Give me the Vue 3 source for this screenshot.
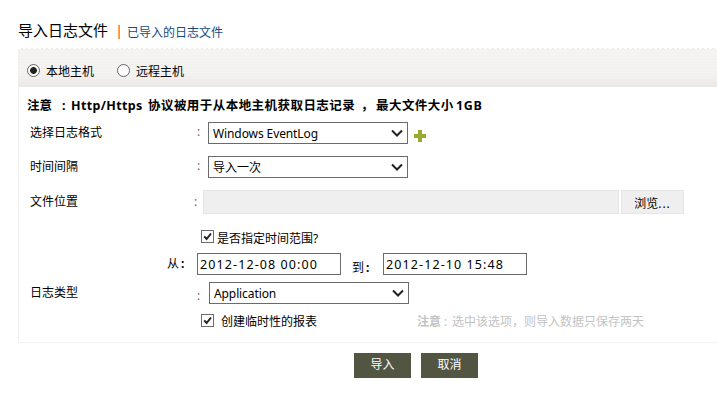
<script setup>
import { ref } from 'vue'

const host = ref('local')
const format = ref('Windows EventLog')
const interval = ref('导入一次')
const useRange = ref(true)
const from = ref('2012-12-08 00:00')
const to = ref('2012-12-10 15:48')
const logType = ref('Application')
const temporary = ref(true)
</script>

<template>
  <main class="page">
    <header class="heading">
      <h1>导入日志文件</h1>
      <i class="divider"></i>
      <a class="imported">已导入的日志文件</a>
    </header>

    <section class="panel">
      <div class="hosts">
        <label><input v-model="host" type="radio" value="local" /><span>本地主机</span></label>
        <label class="remote"><input v-model="host" type="radio" value="remote" /><span>远程主机</span></label>
      </div>

      <p class="note">
        <span class="n1">注意</span><span class="n2">:</span><span class="n3">Http/Https</span><span class="n4">协议被用于从本地主机获取日志记录</span><span class="n5">，</span><span class="n6">最大文件大小</span><span class="n7">1GB</span>
      </p>

      <div class="row format">
        <span class="name">选择日志格式</span><span class="colon">:</span>
        <div class="select">
          <select v-model="format"><option>Windows EventLog</option></select>
          <svg class="chevron" viewBox="0 0 12 9"><path d="M1 1.5 6 6.5 11 1.5" /></svg>
        </div>
        <svg class="plus" viewBox="0 0 12 12"><path d="M4 0h4v4h4v4H8v4H4V8H0V4h4z" /></svg>
      </div>

      <div class="row interval">
        <span class="name">时间间隔</span><span class="colon">:</span>
        <div class="select cjk">
          <select v-model="interval"><option>导入一次</option></select>
          <svg class="chevron" viewBox="0 0 12 9"><path d="M1 1.5 6 6.5 11 1.5" /></svg>
        </div>
      </div>

      <div class="row location">
        <span class="name">文件位置</span><span class="colon">:</span>
        <div class="path"></div>
        <button class="browse">浏览<span>...</span></button>
      </div>

      <label class="row range">
        <span class="box"><input v-model="useRange" type="checkbox" /><svg viewBox="0 0 13 13"><path d="M3.2 6.4 5.6 9 10 3.5" /></svg></span>
        <span class="caption">是否指定时间范围?</span>
      </label>

      <div class="row dates">
        <span class="from">从<b>:</b></span>
        <input v-model="from" class="date" type="text" />
        <span class="to">到<b>:</b></span>
        <input v-model="to" class="date" type="text" />
      </div>

      <div class="row type">
        <span class="name">日志类型</span><span class="colon">:</span>
        <div class="select">
          <select v-model="logType"><option>Application</option></select>
          <svg class="chevron" viewBox="0 0 12 9"><path d="M1 1.5 6 6.5 11 1.5" /></svg>
        </div>
      </div>

      <div class="row temporary">
        <label class="temp">
          <span class="box"><input v-model="temporary" type="checkbox" /><svg viewBox="0 0 13 13"><path d="M3.2 6.4 5.6 9 10 3.5" /></svg></span>
          <span class="caption">创建临时性的报表</span>
        </label>
        <span class="hint"><b>注意</b><i>:</i>选中该选项，则导入数据只保存两天</span>
      </div>
    </section>

    <footer class="actions">
      <button>导入</button>
      <button>取消</button>
    </footer>
  </main>
</template>

<style>
body {
  background: #fff;
  overflow: hidden;
}
</style>

<style scoped>
* {
  box-sizing: border-box;
}
.page {
  width: 717px;
  height: 407px;
  padding: 20px 0 0 18px;
  overflow: hidden;
  color: #000;
  font: 12px/14px "Noto Sans", "Noto Sans CJK SC", sans-serif;
  white-space: nowrap;
}
input, select, button {
  margin: 0;
  border-radius: 0;
  appearance: none;
  color: inherit;
  font: inherit;
}
.heading {
  display: flex;
  height: 28px;
}
h1 {
  width: 100px;
  margin: 0;
  font-size: 15px;
  font-weight: 400;
  line-height: 20px;
}
.divider {
  width: 2px;
  height: 14px;
  margin-top: 5px;
  border-left: 1px solid #ffa64d;
  border-right: 1px solid #c9a37b;
}
.imported {
  margin: 6px 0 0 7px;
  color: #164b7c;
}
.panel {
  height: 295px;
  border-left: 1px solid #f1f1f1;
  border-bottom: 1px solid #f1f1f1;
}
.hosts {
  display: flex;
  height: 39px;
  margin-left: -1px;
  padding: 15px 0 0 9px;
  border-top: 1px dashed #fff;
  background:
    repeating-linear-gradient(0deg, transparent 0 2px, rgba(255, 255, 255, .18) 2px 3px),
    linear-gradient(#f5f3f0, #f3f1ef 65%, #eae7e4);
}
.hosts label {
  display: flex;
  width: 90px;
}
.hosts input {
  width: 13px;
  height: 13px;
  border: 1px solid #666;
  border-radius: 50%;
  background: #fff;
}
.hosts input:checked {
  background: radial-gradient(circle, #222 0 3px, #fff 3.8px);
}
.hosts span {
  margin: 1px 0 0 6px;
}
.note {
  display: flex;
  height: 35px;
  margin: 0;
  padding: 12px 0 0 8px;
  font-weight: 700;
  font-size: 12.5px;
}
.n1 { width: 35px; }
.n2 { width: 9px; }
.n3 { width: 77px; letter-spacing: .35px; }
.n4 { width: 213px; letter-spacing: .45px; }
.n5 { width: 15px; }
.n6 { width: 80px; letter-spacing: .45px; }
.n7 { letter-spacing: .6px; }
.row {
  display: flex;
}
.name {
  width: 167px;
  padding: 4px 0 0 11px;
}
.colon {
  width: 22px;
  padding: 3px 0 0 11px;
  color: #765;
}
.select {
  display: grid;
  grid-template-columns: 182px 18px;
  align-items: center;
  width: 200px;
  height: 22px;
  border: 1px solid #6b6b6b;
}
.select select {
  grid-area: 1 / 1 / 2 / 3;
  width: 198px;
  height: 20px;
  padding: 2px 0 0 4px;
  border: 0;
  background: #fff;
  letter-spacing: -.1px;
}
.select.cjk select {
  letter-spacing: 0;
}
.chevron {
  grid-area: 1 / 2;
  z-index: 1;
  width: 12px;
  height: 9px;
  pointer-events: none;
}
.chevron path, .box path {
  fill: none;
  stroke: #222;
  stroke-width: 2;
}
.plus {
  width: 12px;
  height: 12px;
  margin: 8px 0 0 6px;
  fill: #96ab2f;
}
.interval, .location {
  margin-top: 12px;
}
.location .name {
  width: 162px;
  padding: 5px 0 0 11px;
}
.location .name + .colon {
  width: 22px;
  padding: 5px 0 0 13px;
}
.path {
  width: 416px;
  height: 24px;
  border: 1px solid #e5e5e2;
  background: #efefef;
}
.browse {
  width: 63px;
  height: 24px;
  margin-left: 2px;
  padding: 3px 0 0;
  border: 1px solid #e5e5e2;
  background: #efefef;
}
.browse span {
  letter-spacing: .9px;
}
.range {
  height: 13px;
  margin-top: 16px;
  padding-left: 182px;
}
.box {
  display: grid;
  width: 13px;
  height: 13px;
}
.box input {
  grid-area: 1 / 1;
  border: 1px solid #6b6b6b;
}
.box svg {
  grid-area: 1 / 1;
  width: 13px;
  height: 13px;
  pointer-events: none;
}
.caption {
  margin: 2px 0 0 3px;
}
.dates {
  height: 22px;
  margin-top: 10px;
  padding-left: 148px;
}
.from {
  width: 30px;
  padding-top: 4px;
}
.to {
  width: 42px;
  padding: 8px 0 0 11px;
}
.from b, .to b {
  margin-left: 2px;
}
.date {
  width: 144px;
  height: 22px;
  padding: 1px 2px 0;
  border: 1px solid #6b6b6b;
  font-size: 12.5px;
  letter-spacing: 1.1px;
}
.type {
  margin-top: 7px;
}
.type .colon {
  width: 23px;
  padding-top: 7px;
}
.temporary {
  height: 13px;
  margin-top: 10px;
  padding-left: 182px;
}
.temp {
  display: flex;
  width: 216px;
}
.temp .caption {
  margin: 1px 0 0 7px;
}
.hint {
  margin-top: 1px;
  color: #c3c3c3;
}
.hint i {
  display: inline-block;
  width: 11px;
  padding-left: 3px;
  font-style: normal;
}
.actions {
  display: flex;
  gap: 10px;
  padding: 10px 0 0 336px;
}
.actions button {
  width: 57px;
  height: 25px;
  padding: 0 0 2px;
  border: 0;
  background: #515542;
  color: #fff;
}
</style>
